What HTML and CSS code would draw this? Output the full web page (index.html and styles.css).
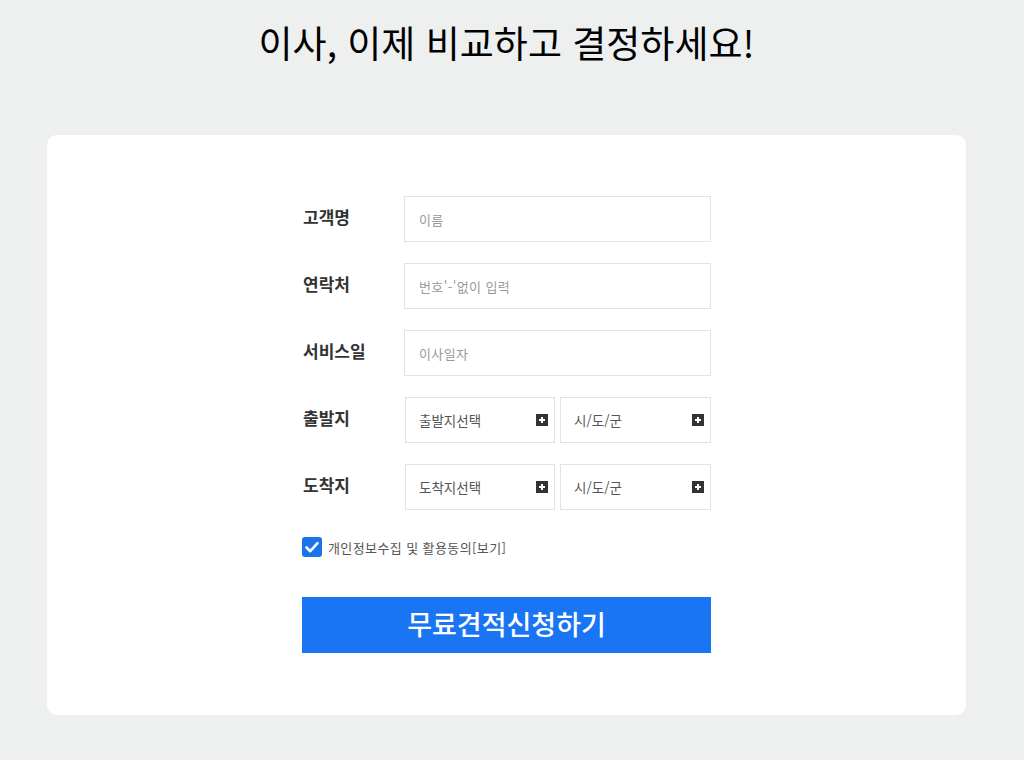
FILE: index.html
```html
<!DOCTYPE html>
<html lang="ko">
<head>
<meta charset="utf-8">
<link rel="stylesheet" href="styles.css">
</head>
<body>
<div class="wrap">
  <h1 class="title">이사, 이제 비교하고 결정하세요!</h1>
  <div class="card">
    <form class="form">
      <div class="row">
        <div class="label">고객명</div>
        <div class="input">이름</div>
      </div>
      <div class="row">
        <div class="label">연락처</div>
        <div class="input">번호'-'없이 입력</div>
      </div>
      <div class="row">
        <div class="label">서비스일</div>
        <div class="input">이사일자</div>
      </div>
      <div class="row">
        <div class="label">출발지</div>
        <div class="selects">
          <div class="select">출발지선택<span class="plus"></span></div>
          <div class="select">시/도/군<span class="plus"></span></div>
        </div>
      </div>
      <div class="row">
        <div class="label">도착지</div>
        <div class="selects">
          <div class="select">도착지선택<span class="plus"></span></div>
          <div class="select">시/도/군<span class="plus"></span></div>
        </div>
      </div>
      <div class="agree">
        <span class="check"><svg width="20" height="20" viewBox="0 0 20 20"><path d="M4.5 10.5 L8.3 14.2 L15.5 6.2" fill="none" stroke="#fff" stroke-width="2.6" stroke-linecap="round" stroke-linejoin="round"/></svg></span>
        <span class="agree-text">개인정보수집 및 활용동의[보기]</span>
      </div>
      <div class="submit">무료견적신청하기</div>
    </form>
  </div>
</div>
</body>
</html>
```
FILE: styles.css
```css
* { box-sizing: border-box; }
html, body { margin: 0; padding: 0; }
body {
  background: #eeefef;
  font-family: "Noto Sans CJK KR", "Noto Sans", sans-serif;
  color: #222;
  width: 1024px;
  height: 760px;
  overflow: hidden;
}
.wrap {
  width: 919px;
  margin-left: 47px;
}
.title {
  margin: 0;
  padding-top: 16px;
  height: 135px;
  text-align: center;
  font-size: 37px;
  font-weight: 400;
  line-height: 52px;
  color: #000;
  letter-spacing: 0;
}
.card {
  background: #fff;
  border-radius: 10px;
  height: 580px;
  padding-top: 61px;
  display: flex;
  justify-content: center;
}
.form {
  width: 409px;
  display: flex;
  flex-direction: column;
}
.row {
  display: flex;
  align-items: center;
  height: 46px;
  margin-bottom: 21px;
}
.label {
  width: 102px;
  font-size: 17px;
  font-weight: 700;
  color: #333;
  padding-left: 1px;
  margin-top: -5px;
}
.input {
  width: 307px;
  height: 46px;
  border: 1px solid #e3e3e3;
  padding-left: 14px;
  display: flex;
  align-items: center;
  font-size: 13px;
  letter-spacing: 0.4px;
  color: #999;
}
.selects {
  display: flex;
  gap: 5px;
  margin-left: 2px;
}
.select {
  width: 150px;
  height: 46px;
  border: 1px solid #e3e3e3;
  padding-left: 13px;
  padding-right: 6px;
  display: flex;
  align-items: center;
  justify-content: space-between;
  font-size: 13.5px;
  color: #555;
}
.select + .select { width: 151px; }
.plus {
  width: 12px;
  height: 12px;
  background: #333;
  position: relative;
}
.plus::before, .plus::after {
  content: "";
  position: absolute;
  background: #fff;
}
.plus::before { left: 3px; top: 5px; width: 6px; height: 2px; }
.plus::after { left: 5px; top: 3px; width: 2px; height: 6px; }
.agree {
  display: flex;
  align-items: center;
  margin-top: 5px;
  height: 22px;
}
.check {
  width: 20px;
  height: 20px;
  border-radius: 3px;
  background: #1a73e8;
  display: flex;
  margin-right: 6px;
}
.agree-text {
  font-size: 13px;
  letter-spacing: 0.4px;
  color: #555;
}
.submit {
  margin-top: 39px;
  height: 56px;
  background: #1a75f5;
  color: #fff;
  font-size: 27px;
  font-weight: 500;
  display: flex;
  align-items: center;
  justify-content: center;
  padding-bottom: 3px;
}
```
